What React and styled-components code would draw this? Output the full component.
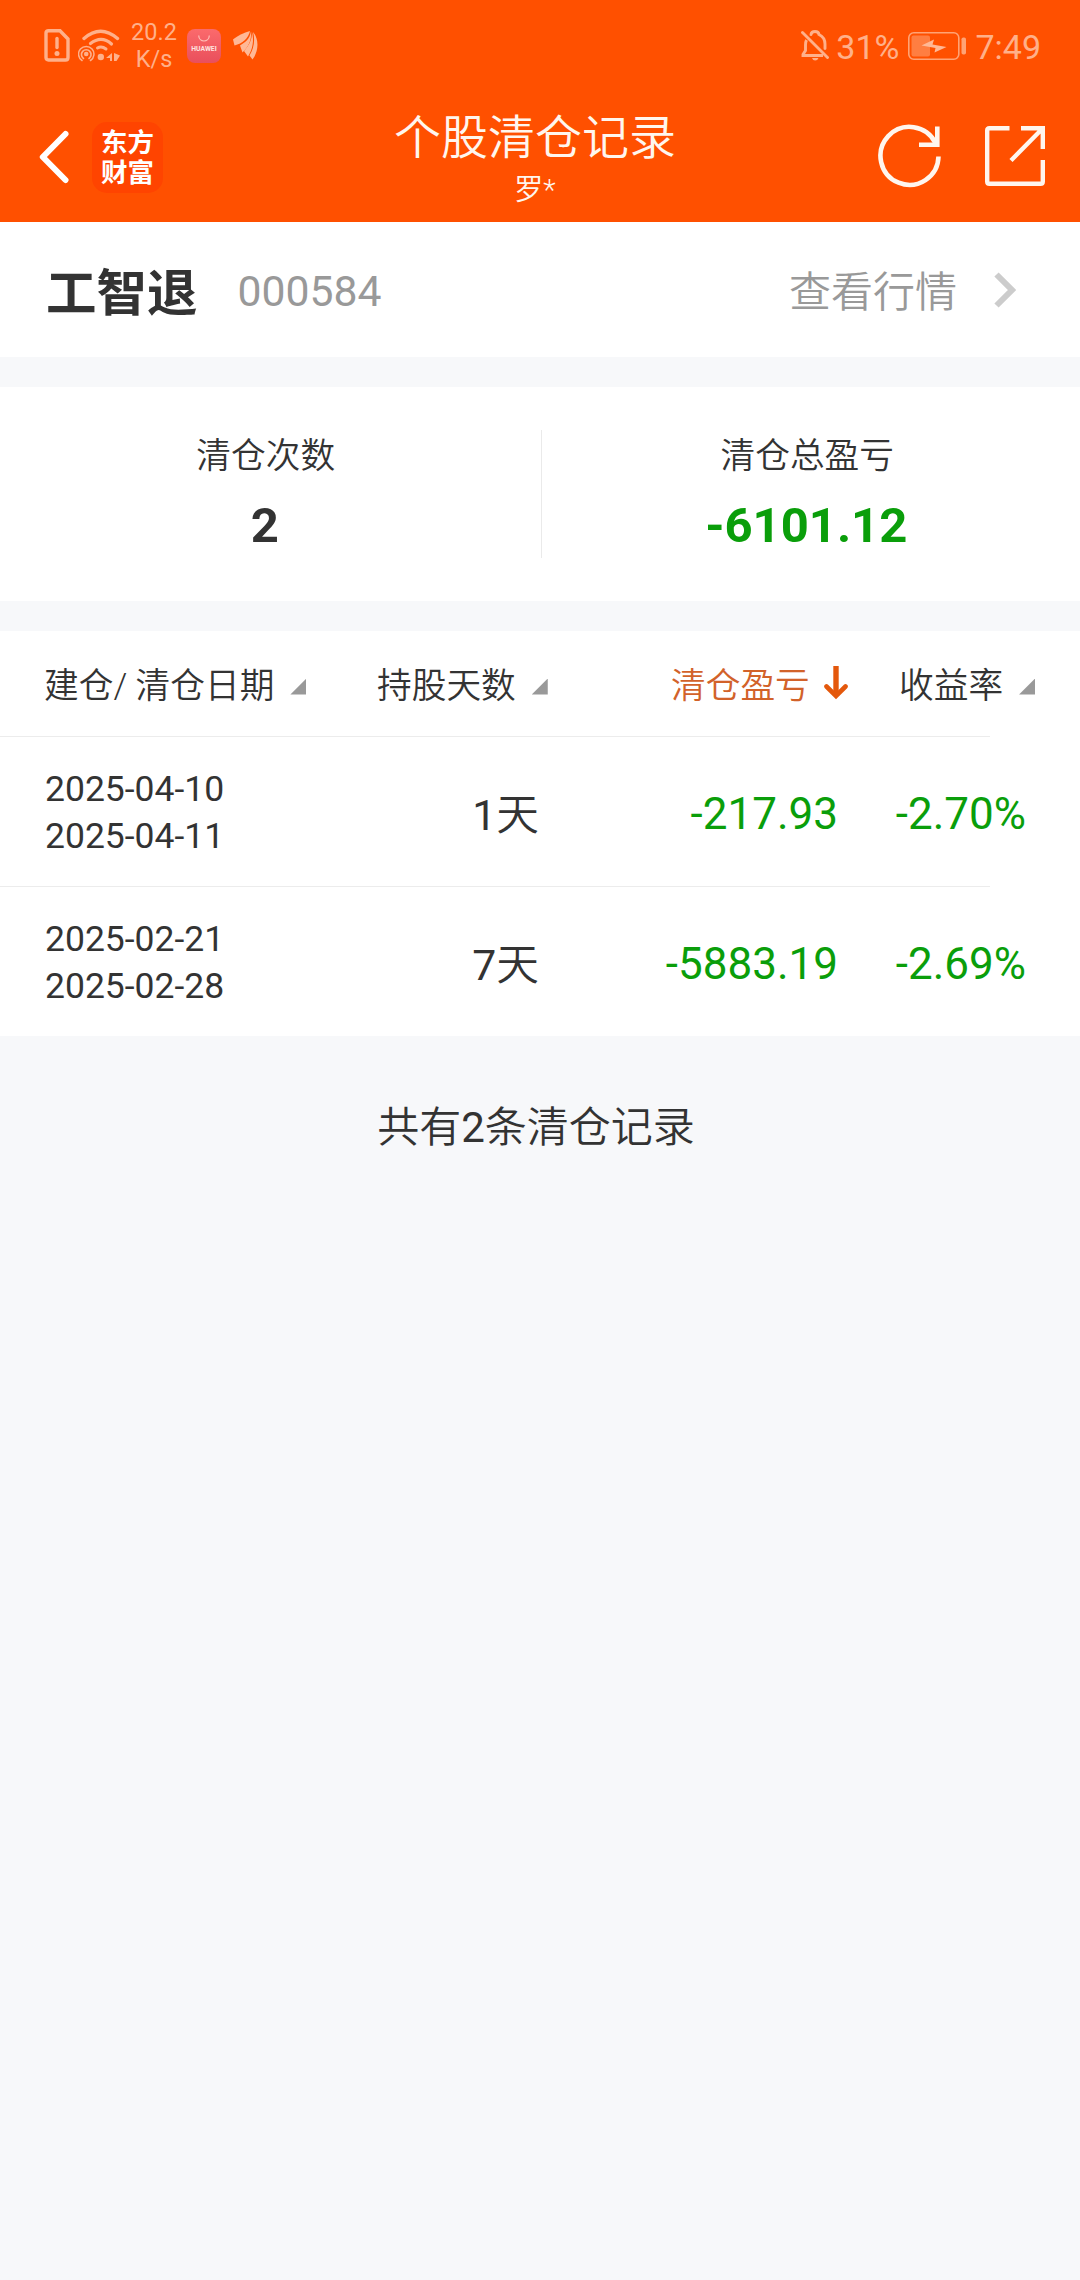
import styled, { createGlobalStyle, css } from 'styled-components';

const records = [
  { open: '2025-04-10', close: '2025-04-11', days: 1, profit: '-217.93', rate: '-2.70%' },
  { open: '2025-02-21', close: '2025-02-28', days: 7, profit: '-5883.19', rate: '-2.69%' },
];

const App = () => (
  <Page>
    <GlobalStyle />
    <Header>
      <StatusBar>
        <StatusLeft>
          <SimIcon />
          <WifiIcon />
          <NetSpeed>
            <span>20.2</span>
            <span>K/s</span>
          </NetSpeed>
          <HuaweiBadge>
            <BagHandle />
            <span>HUAWEI</span>
          </HuaweiBadge>
          <FeatherIcon />
        </StatusLeft>
        <StatusRight>
          <MutedBellIcon />
          <StatusText>31%</StatusText>
          <BatteryIcon />
          <StatusText>7:49</StatusText>
        </StatusRight>
      </StatusBar>
      <NavBar>
        <NavSide>
          <BackIcon />
          <Logo>
            <span>东方</span>
            <span>财富</span>
          </Logo>
        </NavSide>
        <NavTitle>
          <h1>个股清仓记录</h1>
          <p>罗*</p>
        </NavTitle>
        <NavActions>
          <RefreshIcon />
          <ShareIcon />
        </NavActions>
      </NavBar>
    </Header>

    <StockRow>
      <StockName>工智退</StockName>
      <StockCode>000584</StockCode>
      <QuoteLink>
        <span>查看行情</span>
        <ChevronIcon />
      </QuoteLink>
    </StockRow>

    <Summary>
      <SummaryItem>
        <SummaryLabel>清仓次数</SummaryLabel>
        <SummaryValue>2</SummaryValue>
      </SummaryItem>
      <SummaryItem>
        <SummaryLabel>清仓总盈亏</SummaryLabel>
        <SummaryValue $loss>-6101.12</SummaryValue>
      </SummaryItem>
    </Summary>

    <Table>
      <TableHead>
        <HeadCell>
          建仓/ 清仓日期
          <SortMark />
        </HeadCell>
        <HeadCell>
          持股天数
          <SortMark />
        </HeadCell>
        <HeadCell $active>
          清仓盈亏
          <SortArrow />
        </HeadCell>
        <HeadCell>
          收益率
          <SortMark />
        </HeadCell>
      </TableHead>
      {records.map((record) => (
        <TableRow key={record.open}>
          <Dates>
            <span>{record.open}</span>
            <span>{record.close}</span>
          </Dates>
          <Days>
            <Digit>{record.days}</Digit>天
          </Days>
          <Amount>{record.profit}</Amount>
          <Amount>{record.rate}</Amount>
        </TableRow>
      ))}
    </Table>

    <Total>
      共有<Digit>{records.length}</Digit>条清仓记录
    </Total>
  </Page>
);

export default App;

//-- icons
const SimIcon = () => (
  <svg width="26" height="33" viewBox="0 0 26 33" fill="none" stroke="#ffb08a" strokeWidth="3.4">
    <path d="M4.5 1.7H16L24 10V28.5Q24 31 21.5 31H4.5Q2 31 2 28.5V4Q2 1.7 4.5 1.7Z" />
    <path d="M13 9.5v9" strokeWidth="3.4" strokeLinecap="round" />
    <circle cx="13" cy="24.5" r="2.5" fill="#ffb08a" stroke="none" />
  </svg>
);

const WifiIcon = () => (
  <svg width="42" height="33" viewBox="0 0 42 33" fill="none" stroke="#ffb08a" strokeLinecap="round">
    <path d="M6 9.5Q22.5 -5 39.5 9.5" strokeWidth="3.4" />
    <path d="M12.5 14.5Q23.5 6 33.5 15" strokeWidth="3.2" />
    <path d="M19.5 19Q23.5 16.5 28 20" strokeWidth="3" />
    <circle cx="22.8" cy="28" r="3.2" fill="#ffb08a" stroke="none" />
    <circle cx="8.2" cy="25" r="2.3" fill="#ffb08a" stroke="none" />
    <path d="M5.5 29.5A4.8 4.8 0 1 1 11 29.5" strokeWidth="1.6" />
    <path d="M4 31.5A7.7 7.7 0 1 1 12.5 31.5" strokeWidth="1.5" />
    <path d="M34 24v8h-2v-3h-4zM36 24l6 2.5-3.5 5.5H36z" fill="#ffb08a" stroke="none" />
  </svg>
);

const BagHandle = () => (
  <svg width="12" height="7" viewBox="0 0 12 7" fill="none" stroke="#ffc0b8" strokeWidth="1.2">
    <path d="M.7 .5C1 7.8 11 7.8 11.3 .5" />
  </svg>
);

const FeatherIcon = () => (
  <svg width="25" height="29" viewBox="0 0 25 29" fill="#ffb896">
    <path d="M17 0C11 1.5 4 5 0 8.5L1.5 14.5C9.5 12.5 15.5 7 17 0Z" />
    <path d="M17.8 .5C17 8 12 11.5 7 14.5L9.5 21.5C15.5 16 19 8.5 17.800 .5Z" />
    <path d="M18.800 .5C19.500 9 15.500 15 11 20L15 25.500C19.500 18.500 21.500 9.500 18.800 .5Z" />
    <path d="M20 1C22.500 9.500 20.500 18 16.500 24.500L19.500 28.500C25.500 20.500 26.500 8.500 20 1Z" />
  </svg>
);

const MutedBellIcon = () => (
  <svg width="28" height="31" viewBox="0 0 28 31" fill="none" stroke="#ffb08a" strokeWidth="2.9">
    <path d="M1.5 2.5L26.5 27.5" strokeLinecap="round" />
    <path d="M10 4.5Q10.5 1.5 14 1.5T18 4.5Q24 7.5 24 14V18.5" strokeLinecap="round" />
    <path d="M5.5 10Q4.5 12 4.5 15V20.5L2 24.5V25.5H22" />
    <path d="M11 28H17.5Q16.5 30.5 14.2 30.5T11 28Z" fill="#ffb08a" stroke="none" />
  </svg>
);

const BatteryIcon = () => (
  <svg width="58" height="28" viewBox="0 0 58 28" fill="none">
    <rect x=".8" y=".8" width="50" height="26.4" rx="5" stroke="#ffa375" strokeWidth="1.6" />
    <rect x="3.5" y="3.5" width="18.5" height="21" rx="2" fill="#ff7e41" />
    <path d="M26 7.5L24.5 12.5L38.5 15L26.5 20.5L27.5 16L13.5 13.5Z" fill="#ffb896" />
    <rect x="53.5" y="5.5" width="4.5" height="17" rx="1.8" fill="#ffa375" />
  </svg>
);

const BackIcon = () => (
  <svg width="30" height="54" viewBox="0 0 30 54" fill="none" stroke="#fff" strokeWidth="6">
    <path d="M26.5 4L3.8 27L26.5 50" strokeLinecap="round" strokeLinejoin="round" />
  </svg>
);

const RefreshIcon = () => (
  <svg width="64" height="64" viewBox="0 0 64 64" fill="none" stroke="#fff6ee" strokeWidth="4.6">
    <path d="M60.5 32.5A29 29 0 1 1 57.5 19" />
    <path d="M59.3 2.5V20.7H41" />
  </svg>
);

const ShareIcon = () => (
  <svg width="62" height="62" viewBox="0 0 62 62" fill="none" stroke="#fff6ee" strokeWidth="4.4">
    <path d="M25.5 3.2H5.5Q3.2 3.2 3.2 5.5V56.5Q3.2 58.8 5.5 58.8H56.5Q58.8 58.8 58.8 56.5V35" />
    <path d="M37 3.2H58.8V24M58.8 3.2L27 35.5" />
  </svg>
);

const ChevronIcon = () => (
  <svg width="22" height="36" viewBox="0 0 22 36" fill="none" stroke="#ccc" strokeWidth="6">
    <path d="M2.5 2.5L18 18L2.5 33.5" />
  </svg>
);

const SortArrow = () => (
  <svg width="24" height="34" viewBox="0 0 24 34" fill="none" stroke="#e4580c">
    <path d="M12 0V30" strokeWidth="5.4" />
    <path d="M2.5 20.5L12 30L21.5 20.5" strokeWidth="4.6" strokeLinecap="round" />
  </svg>
);

//-- styles
const GlobalStyle = createGlobalStyle`
  * {
    box-sizing: border-box;
  }
  body {
    margin: 0;
    background: #f7f8fa;
  }
  h1, p {
    margin: 0;
    font-weight: inherit;
  }
  svg {
    display: block;
    flex: none;
  }
`;

const light = css`
  font-weight: 350;
`;

const Page = styled.div`
  width: 1080px;
  min-height: 2280px;
  background: #f7f8fa;
  color: #333;
  font-family: Roboto, 'Noto Sans CJK SC', sans-serif;
  font-weight: 400;
`;

const Digit = styled.span`
  font-weight: 400;
`;

const Header = styled.header`
  height: 222px;
  background: #ff5000;
  color: #fff6ee;
`;

const StatusBar = styled.div`
  display: flex;
  justify-content: space-between;
  height: 92px;
  padding: 0 39px 0 44px;
  color: #ffb08a;
`;

const StatusLeft = styled.div`
  display: flex;
  align-items: center;
  height: 90px;
  svg:nth-of-type(2) {
    margin-left: 8px;
  }
`;

const StatusRight = styled.div`
  display: flex;
  align-items: center;
  height: 91px;
`;

const NetSpeed = styled.div`
  display: flex;
  flex-direction: column;
  align-items: center;
  width: 46px;
  margin: 2px 10px 0 11px;
  font-size: 23.5px;
  line-height: 27px;
`;

const HuaweiBadge = styled.div`
  display: flex;
  flex-direction: column;
  align-items: center;
  width: 34px;
  height: 34px;
  padding-top: 6px;
  margin: 2px 12px 0 0;
  border-radius: 8px;
  background: linear-gradient(#fb6a6c, #e94f5c);
  color: #ffe4e0;
  font-size: 6.8px;
  font-weight: 700;
  line-height: 14px;
`;

const StatusText = styled.span`
  margin: 2px 9px 0 7px;
  font-size: 34px;
  line-height: 40px;
  &:last-child {
    margin: 2px 0 0 9px;
  }
`;

const NavBar = styled.div`
  display: grid;
  grid-template-columns: 285px 1fr 300px;
  height: 130px;
  padding: 0 34px 0 39px;
`;

const NavSide = styled.div`
  display: flex;
  align-items: center;
  gap: 23px;
  height: 130px;
`;

const Logo = styled.div`
  display: flex;
  flex-direction: column;
  align-items: center;
  width: 71px;
  height: 71px;
  padding-top: 6px;
  border-radius: 15px;
  background: #ff4400;
  color: #fff;
  font-size: 26.5px;
  font-weight: 700;
  line-height: 30px;
`;

const NavTitle = styled.div`
  text-align: center;
  ${light}
  h1 {
    padding-top: 11px;
    font-size: 47px;
    line-height: 70px;
  }
  p {
    font-size: 29px;
    line-height: 35px;
  }
`;

const NavActions = styled.div`
  display: flex;
  justify-content: flex-end;
  align-items: center;
  gap: 42px;
  height: 128px;
`;

const StockRow = styled.section`
  display: flex;
  align-items: center;
  height: 135px;
  padding: 0 64px 0 46px;
  background: #fff;
`;

const StockName = styled.h1`
  margin-top: -2px;
  font-size: 50.5px;
  font-weight: 700;
`;

const StockCode = styled.span`
  margin: 2px 0 0 40px;
  color: #999;
  font-size: 42.7px;
`;

const QuoteLink = styled.a`
  display: flex;
  align-items: center;
  gap: 37px;
  margin-left: auto;
  color: #999;
  font-size: 42px;
  ${light}
  span {
    margin-top: -3px;
  }
`;

const Summary = styled.section`
  display: flex;
  align-items: center;
  height: 214px;
  margin: 30px 0;
  background: #fff;
`;

const SummaryItem = styled.div`
  flex: 1;
  height: 128px;
  padding-right: 9px;
  text-align: center;
  & + & {
    padding-right: 7px;
    border-left: 1px solid #eaeaea;
  }
`;

const SummaryLabel = styled.p`
  font-size: 34.7px;
  line-height: 52px;
  ${light}
`;

const SummaryValue = styled.p`
  margin-top: 14px;
  padding-right: 2px;
  font-size: 49px;
  font-weight: 700;
  line-height: 60px;
  color: ${({ $loss }) => ($loss ? '#0a9e0a' : '#333')};
`;

const Table = styled.section`
  background: #fff;
`;

const underline = css`
  background: linear-gradient(#ececec, #ececec) left bottom / 990px 1px no-repeat;
`;

const TableHead = styled.div`
  display: grid;
  grid-template-columns: 333px 294px 228px 1fr;
  align-items: center;
  height: 106px;
  padding: 0 0 2px 44px;
  ${underline}
`;

const HeadCell = styled.div`
  display: flex;
  align-items: center;
  gap: ${({ $active }) => ($active ? 14 : 16)}px;
  white-space: pre;
  font-size: 34.7px;
  color: ${({ $active }) => ($active ? '#d2622a' : '#333')};
  ${light}
`;

const SortMark = styled.i`
  width: 16px;
  height: 16px;
  margin-top: 7px;
  background: #999;
  clip-path: polygon(100% 0, 100% 100%, 0 100%);
`;

const TableRow = styled.div`
  display: grid;
  grid-template-columns: 333px 161px 299px 188px;
  align-items: center;
  height: 150px;
  padding-left: 45px;
  ${underline}
  &:last-child {
    height: 149px;
    background: none;
  }
`;

const Dates = styled.div`
  display: flex;
  flex-direction: column;
  margin-top: 2px;
  font-size: 35.5px;
  line-height: 47px;
`;

const Days = styled.div`
  margin-top: -2px;
  font-size: 42.7px;
  text-align: right;
  ${light}
`;

const Amount = styled.div`
  margin-top: 4px;
  color: #0a9e0a;
  font-size: 44px;
  text-align: right;
`;

const Total = styled.p`
  padding-right: 8px;
  margin-top: 61px;
  font-size: 42px;
  line-height: 62px;
  text-align: center;
  ${light}
`;
